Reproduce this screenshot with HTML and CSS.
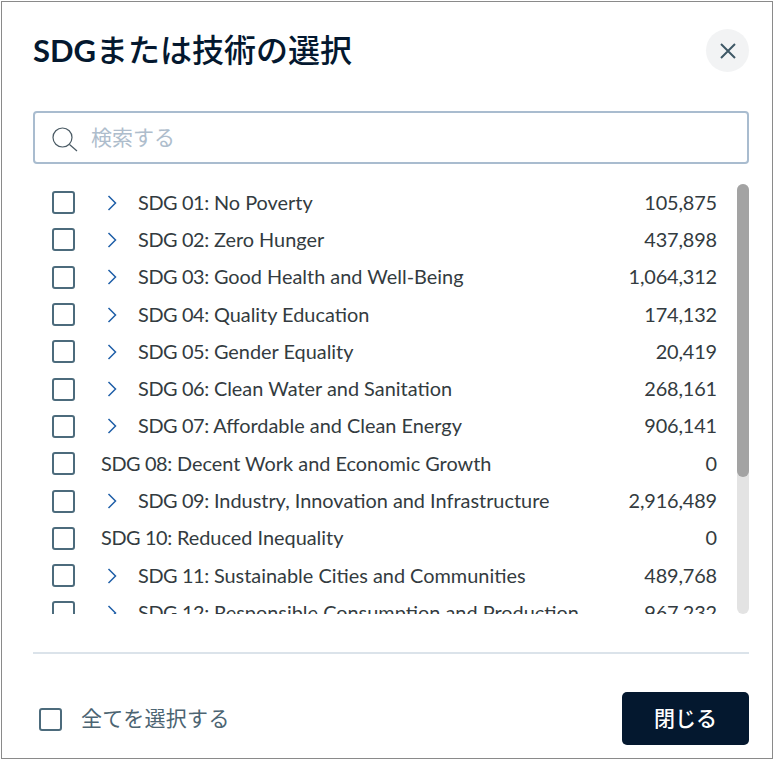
FILE: index.html
```html
<!DOCTYPE html>
<html lang="ja">
<head>
<meta charset="utf-8">
<title>SDGまたは技術の選択</title>
<link rel="stylesheet" href="styles.css">
</head>
<body>
<div class="dialog">
  <header class="head">
    <h1 class="title"><span class="title-latin">SDG</span>または技術の選択</h1>
    <button class="close" aria-label="閉じる">
      <svg width="16" height="16" viewBox="0 0 16 16"><path d="M1 1 15 15M15 1 1 15" fill="none" stroke="#3f5866" stroke-width="2"/></svg>
    </button>
  </header>
  <div class="search">
    <svg class="search-icon" width="26" height="26" viewBox="0 0 26 26"><circle cx="10.5" cy="10.5" r="9.5" fill="none" stroke="#4a5a64" stroke-width="1.2"/><path d="M17.5 17.5 25 24" fill="none" stroke="#4a5a64" stroke-width="1.2"/></svg>
    <span class="placeholder">検索する</span>
  </div>
  <div class="list-wrap">
    <ul class="list">
      <li class="row"><span class="box"></span><svg class="chev" width="10" height="16" viewBox="0 0 10 16"><path d="M1.5 1 8.5 8 1.5 15" fill="none" stroke="#1f5fa8" stroke-width="1.5"/></svg><span class="name"><span class="code">SDG 01:</span> No Poverty</span><span class="count">105,875</span></li>
      <li class="row"><span class="box"></span><svg class="chev" width="10" height="16" viewBox="0 0 10 16"><path d="M1.5 1 8.5 8 1.5 15" fill="none" stroke="#1f5fa8" stroke-width="1.5"/></svg><span class="name"><span class="code">SDG 02:</span> Zero Hunger</span><span class="count">437,898</span></li>
      <li class="row"><span class="box"></span><svg class="chev" width="10" height="16" viewBox="0 0 10 16"><path d="M1.5 1 8.5 8 1.5 15" fill="none" stroke="#1f5fa8" stroke-width="1.5"/></svg><span class="name"><span class="code">SDG 03:</span> Good Health and Well-Being</span><span class="count">1,064,312</span></li>
      <li class="row"><span class="box"></span><svg class="chev" width="10" height="16" viewBox="0 0 10 16"><path d="M1.5 1 8.5 8 1.5 15" fill="none" stroke="#1f5fa8" stroke-width="1.5"/></svg><span class="name"><span class="code">SDG 04:</span> Quality Education</span><span class="count">174,132</span></li>
      <li class="row"><span class="box"></span><svg class="chev" width="10" height="16" viewBox="0 0 10 16"><path d="M1.5 1 8.5 8 1.5 15" fill="none" stroke="#1f5fa8" stroke-width="1.5"/></svg><span class="name"><span class="code">SDG 05:</span> Gender Equality</span><span class="count">20,419</span></li>
      <li class="row"><span class="box"></span><svg class="chev" width="10" height="16" viewBox="0 0 10 16"><path d="M1.5 1 8.5 8 1.5 15" fill="none" stroke="#1f5fa8" stroke-width="1.5"/></svg><span class="name"><span class="code">SDG 06:</span> Clean Water and Sanitation</span><span class="count">268,161</span></li>
      <li class="row"><span class="box"></span><svg class="chev" width="10" height="16" viewBox="0 0 10 16"><path d="M1.5 1 8.5 8 1.5 15" fill="none" stroke="#1f5fa8" stroke-width="1.5"/></svg><span class="name"><span class="code">SDG 07:</span> Affordable and Clean Energy</span><span class="count">906,141</span></li>
      <li class="row leaf"><span class="box"></span><span class="name"><span class="code">SDG 08:</span> Decent Work and Economic Growth</span><span class="count">0</span></li>
      <li class="row"><span class="box"></span><svg class="chev" width="10" height="16" viewBox="0 0 10 16"><path d="M1.5 1 8.5 8 1.5 15" fill="none" stroke="#1f5fa8" stroke-width="1.5"/></svg><span class="name"><span class="code">SDG 09:</span> Industry, Innovation and Infrastructure</span><span class="count">2,916,489</span></li>
      <li class="row leaf"><span class="box"></span><span class="name"><span class="code">SDG 10:</span> Reduced Inequality</span><span class="count">0</span></li>
      <li class="row"><span class="box"></span><svg class="chev" width="10" height="16" viewBox="0 0 10 16"><path d="M1.5 1 8.5 8 1.5 15" fill="none" stroke="#1f5fa8" stroke-width="1.5"/></svg><span class="name"><span class="code">SDG 11:</span> Sustainable Cities and Communities</span><span class="count">489,768</span></li>
      <li class="row"><span class="box"></span><svg class="chev" width="10" height="16" viewBox="0 0 10 16"><path d="M1.5 1 8.5 8 1.5 15" fill="none" stroke="#1f5fa8" stroke-width="1.5"/></svg><span class="name"><span class="code">SDG 12:</span> Responsible Consumption and Production</span><span class="count">967,232</span></li>
    </ul>
    <div class="track"><div class="thumb"></div></div>
  </div>
  <hr class="rule">
  <footer class="foot">
    <label class="all"><span class="box"></span><span class="all-text">全てを選択する</span></label>
    <button class="done">閉じる</button>
  </footer>
</div>
</body>
</html>
```
FILE: styles.css
```css
* { box-sizing: border-box; }
html, body { margin: 0; padding: 0; background: #fff; }
body { padding: 1px; font-family: Lato, "Noto Sans CJK JP", sans-serif; }
.dialog {
  width: 772px;
  height: 758px;
  border: 1px solid #8a8a8a;
  background: #fff;
  padding: 0 23px 0 31px;
  display: flex;
  flex-direction: column;
}
.head {
  height: 109px;
  display: flex;
  justify-content: space-between;
  align-items: flex-start;
  flex: none;
}
.title {
  margin: 26px 0 0;
  font-size: 32px;
  line-height: 44px;
  font-weight: 500;
  color: #04182f;
}
.title-latin { font-size: 31px; font-weight: 700; }
.close {
  width: 43px;
  height: 43px;
  margin-top: 27px;
  border: 0;
  border-radius: 50%;
  background: #f2f3f4;
  padding: 0;
  display: flex;
  align-items: center;
  justify-content: center;
}
.search {
  height: 53px;
  flex: none;
  border: 2px solid #a9bccf;
  border-radius: 4px;
  display: flex;
  align-items: center;
  padding-left: 17px;
  gap: 13px;
}
.search-icon { flex: none; margin-top: 4px; }
.placeholder { font-size: 21px; color: #aebdcc; line-height: 28px; padding-bottom: 2px; }
.list-wrap {
  position: relative;
  height: 450px;
  flex: none;
  padding-top: 20px;
  overflow: hidden;
}
.list {
  list-style: none;
  margin: 0;
  padding: 0 0 0 19px;
  width: 684px;
}
.row {
  height: 37.3px;
  display: flex;
  align-items: center;
  font-size: 19.9px;
  color: #333b40;
}
.box {
  flex: none;
  width: 23px;
  height: 23px;
  border: 2px solid #4c6b7c;
  border-radius: 3px;
  background: #fff;
}
.chev { flex: none; margin: 0 21px 0 32px; }
.leaf .box { margin-right: 26px; }
.name { flex: 1; white-space: nowrap; padding-bottom: 2px; }
.code { letter-spacing: -0.4px; }
.count { flex: none; padding-bottom: 2px; letter-spacing: -0.15px; }
.track {
  position: absolute;
  right: 0;
  top: 20px;
  bottom: 0;
  width: 12px;
  background: #e3e3e3;
  border-radius: 6px;
}
.thumb {
  height: 293px;
  background: #a3a3a3;
  border-radius: 6px;
}
.rule {
  margin: 38px 0 0;
  height: 2px;
  border: 0;
  background: #dbe3ea;
  flex: none;
}
.foot {
  flex: 1;
  display: flex;
  justify-content: space-between;
  align-items: flex-start;
  padding-top: 38px;
}
.all {
  display: flex;
  align-items: center;
  margin: 14px 0 0 6px;
  gap: 19px;
}
.all-text { font-size: 21px; letter-spacing: 0.3px; color: #4c6472; line-height: 24px; padding-bottom: 3px; }
.done {
  width: 127px;
  height: 53px;
  border: 0;
  border-radius: 5px;
  background: #04182f;
  color: #fff;
  padding: 0 0 3px;
  font: 500 21px Lato, "Noto Sans CJK JP", sans-serif;
}
```
